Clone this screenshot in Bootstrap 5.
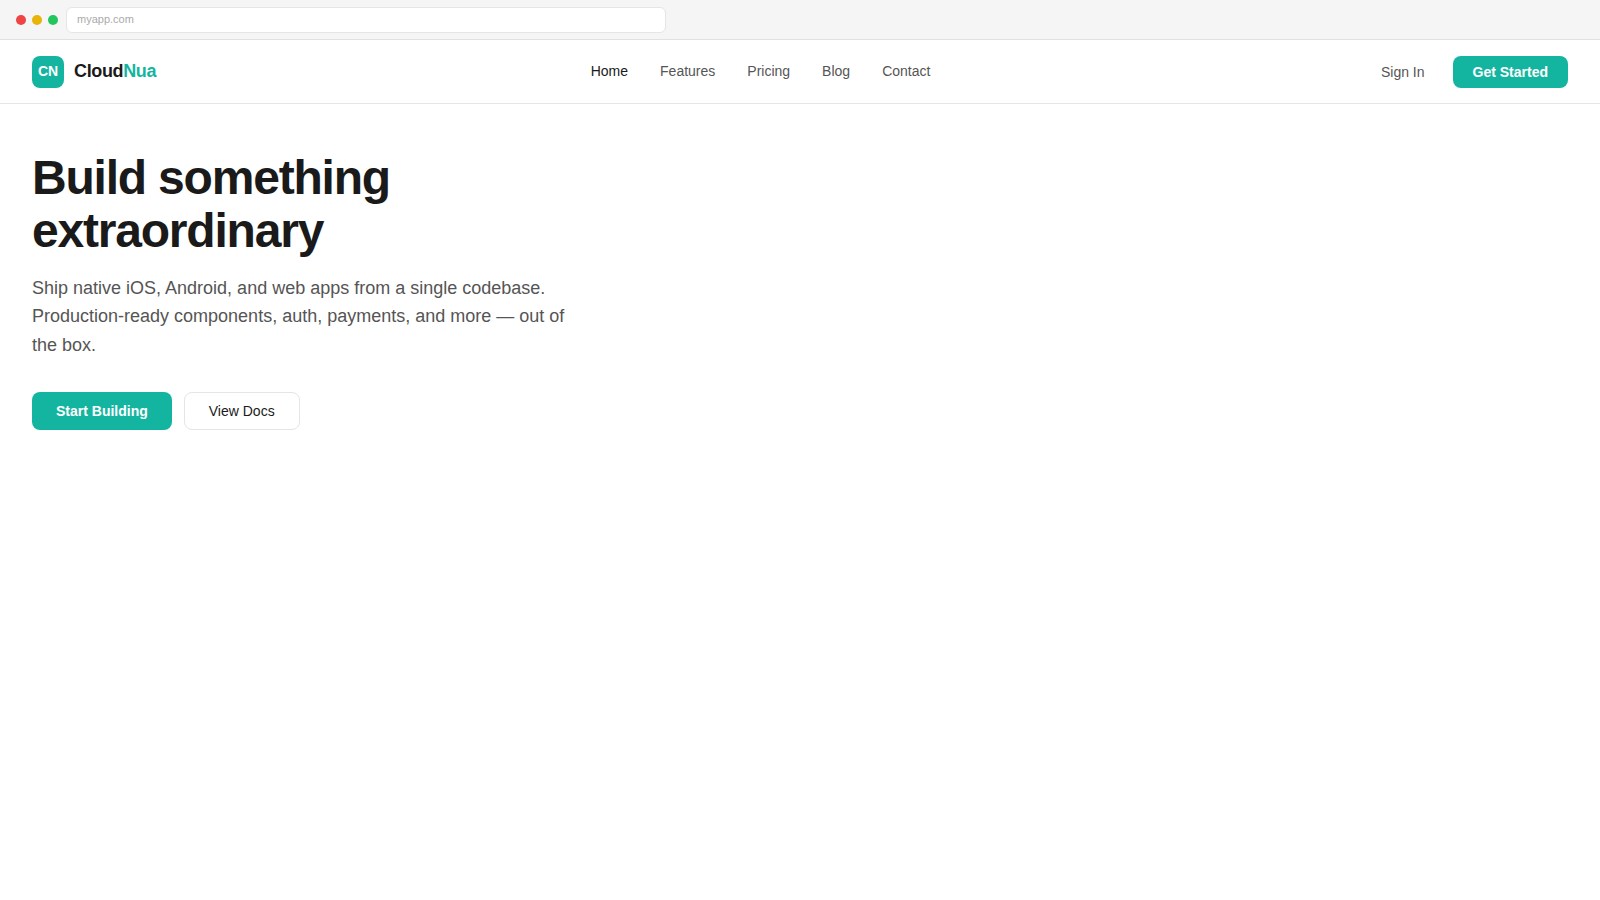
<!DOCTYPE html>
<html lang="en">
<head>
<meta charset="utf-8">
<title>CloudNua</title>
<link href="https://cdn.jsdelivr.net/npm/bootstrap@5.3.0/dist/css/bootstrap.min.css" rel="stylesheet">
<style>
body{font-family:"Liberation Sans",Arial,sans-serif;background:#fff;color:#1a1a1a;}
.chrome-bar{height:40px;background:#f5f5f5;border-bottom:1px solid #e0e0e0;padding:0 16px;gap:6px;}
.win-dot{width:10px;height:10px;border-radius:50%;}
.dot-red{background:#ef4444;}
.dot-yellow{background:#eab308;}
.dot-green{background:#22c55e;}
.addr-field{width:600px;height:26px;background:#fff;border:1px solid #e5e5e5;border-radius:6px;padding:0 10px;font-size:11px;color:#aaa;margin-left:2px;}
.top-nav{height:64px;padding:0 32px;border-bottom:1px solid #e5e5e5;}
.brand-wrap{gap:10px;}
.brand-box{width:32px;height:32px;border-radius:8px;background:#14b5a0;color:#fff;font-size:14px;font-weight:700;}
.brand-name{font-size:18px;font-weight:700;letter-spacing:-.36px;color:#1a1a1a;}
.brand-name span{color:#14b5a0;}
.nav-item-link{font-size:14px;color:#555;text-decoration:none;}
.nav-item-link.is-current{color:#1a1a1a;}
.nav-items{gap:32px;}
.signin-btn{font-size:14px;color:#555;padding:2px 16px 0;border:0;background:none;}
.accent-btn{background:#14b5a0;color:#fff;font-weight:700;border:0;}
.accent-btn:hover{background:#14b5a0;color:#fff;}
.getstarted-btn{font-size:14px;padding:2px 20px 0;height:32px;border-radius:8px;margin-left:12px;}
.hero-area{padding:48px 32px;max-width:620px;}
.hero-title{font-size:48px;font-weight:700;line-height:1.1;letter-spacing:-1.2px;color:#1a1a1a;margin:0 0 16px;}
.hero-text{font-size:18px;line-height:1.6;color:#555;margin:0 0 32px;max-width:560px;}
.start-btn{font-size:14px;height:38px;padding:2px 24px 0;border-radius:8px;}
.docs-btn{font-size:14px;height:38px;padding:2px 24px 0;border-radius:8px;background:#fff;border:1px solid #e5e5e5;color:#1a1a1a;}
</style>
</head>
<body>
<div class="chrome-bar d-flex align-items-center">
  <span class="win-dot dot-red"></span>
  <span class="win-dot dot-yellow"></span>
  <span class="win-dot dot-green"></span>
  <div class="addr-field d-flex align-items-center">myapp.com</div>
</div>
<nav class="top-nav d-flex align-items-center justify-content-between">
  <div class="brand-wrap d-flex align-items-center">
    <div class="brand-box d-flex align-items-center justify-content-center">CN</div>
    <div class="brand-name">Cloud<span>Nua</span></div>
  </div>
  <div class="nav-items d-flex align-items-center">
    <a class="nav-item-link is-current" href="#">Home</a>
    <a class="nav-item-link" href="#">Features</a>
    <a class="nav-item-link" href="#">Pricing</a>
    <a class="nav-item-link" href="#">Blog</a>
    <a class="nav-item-link" href="#">Contact</a>
  </div>
  <div class="d-flex align-items-center justify-content-end">
    <button class="btn signin-btn" type="button">Sign In</button>
    <button class="btn accent-btn getstarted-btn" type="button">Get Started</button>
  </div>
</nav>
<main class="hero-area">
  <h1 class="hero-title">Build something extraordinary</h1>
  <p class="hero-text">Ship native iOS, Android, and web apps from a single codebase. Production-ready components, auth, payments, and more — out of the box.</p>
  <div class="d-flex gap-2">
    <button class="btn accent-btn start-btn" type="button">Start Building</button>
    <button class="btn docs-btn ms-1" type="button">View Docs</button>
  </div>
</main>
<script src="https://cdn.jsdelivr.net/npm/bootstrap@5.3.0/dist/js/bootstrap.bundle.min.js"></script>
</body>
</html>
